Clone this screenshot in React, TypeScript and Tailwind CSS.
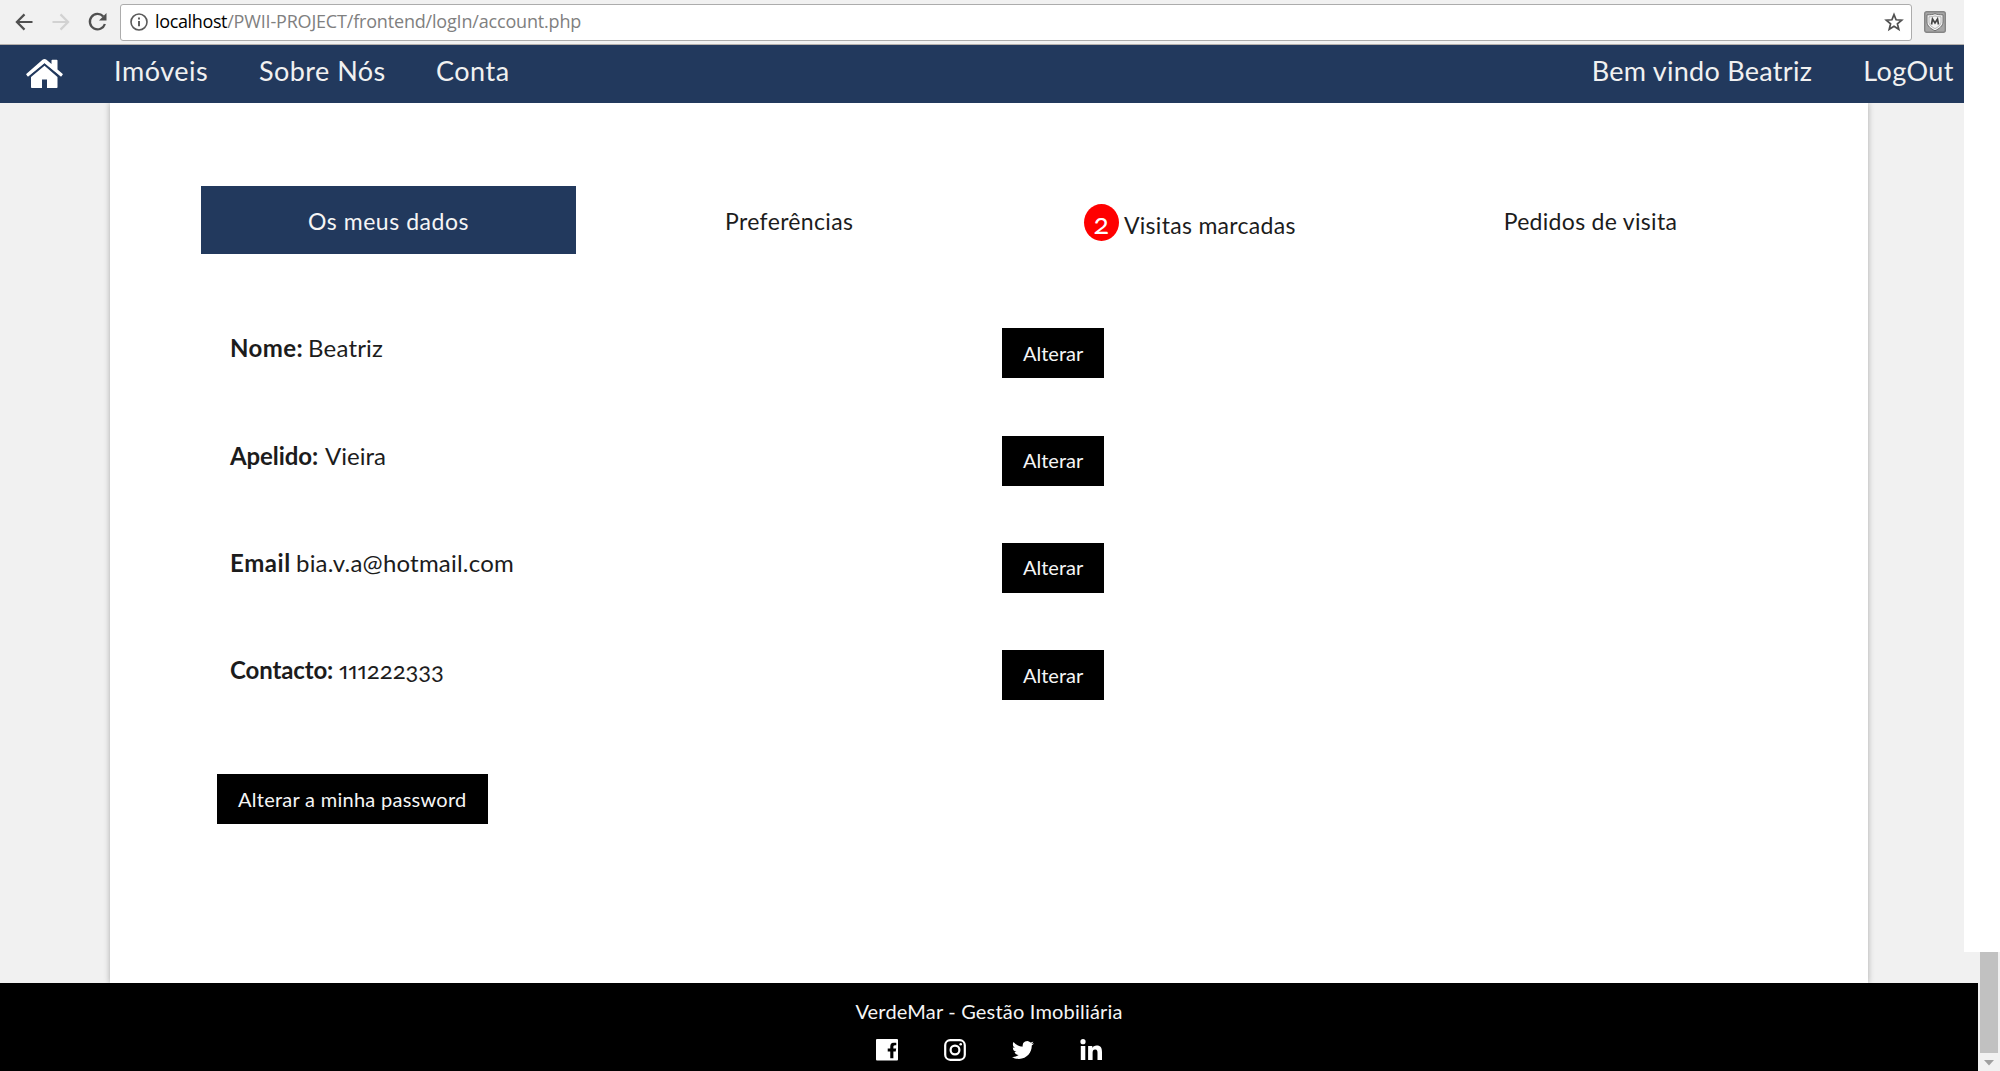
import { FaFacebookF } from "react-icons/fa";
import type { ReactNode } from "react";

function BrowserBar() {
  return (
    <div className="flex h-[45px] w-[1964px] items-center border-b border-[#b5b0ac] bg-[#f1f1f1]">
      <svg className="ml-[15px] h-[18px] w-[18px] shrink-0" viewBox="0 0 18 18" fill="none" stroke="#505050" strokeWidth="2.2">
        <path d="M17.500 9H2M9.500 1.400 1.900 9l7.600 7.600" />
      </svg>
      <svg className="ml-[19px] h-[18px] w-[18px] shrink-0" viewBox="0 0 18 18" fill="none" stroke="#d2d2d2" strokeWidth="2.2">
        <path d="M.5 9H16M8.500 1.400 16.100 9l-7.600 7.600" />
      </svg>
      <svg className="ml-[18px] h-[20px] w-[20px] shrink-0" viewBox="0 0 20 20">
        <path d="M15.200 4.400A7.700 7.700 0 1 0 16.900 12" fill="none" stroke="#505050" strokeWidth="2.3" />
        <path d="M18.500 1v7.500H11z" fill="#505050" />
      </svg>
      <div className="ml-[12px] flex h-[37px] w-[1792px] shrink-0 items-center rounded-[3px] border border-[#acacac] bg-white">
        <svg className="ml-[9px] h-[18px] w-[18px] shrink-0" viewBox="0 0 18 18" fill="none" stroke="#5a5a5a">
          <circle cx="9" cy="9" r="8" strokeWidth="1.6" />
          <path d="M9 8v5.2M9 4.6v2" strokeWidth="1.9" />
        </svg>
        <div className="ml-[7px] flex grow whitespace-nowrap pb-[2px] font-['Open_Sans',sans-serif] text-[18px] leading-[26px]">
          <span className="tracking-[-0.36px] text-black">localhost</span>
          <span className="tracking-[-0.18px] text-[#808080]">/PWII-PROJECT/frontend/logIn/account.php</span>
        </div>
        <svg className="mr-[7px] h-[20px] w-[20px]" viewBox="0 0 20 20" fill="none" stroke="#505050" strokeWidth="1.7">
          <path d="M10 2.600l2.100 5.200 5.600.4-4.300 3.600 1.400 5.500L10 14.300l-4.800 3 1.400-5.500L2.300 8.200l5.600-.4z" />
        </svg>
      </div>
      <svg className="ml-[12px] h-[22px] w-[22px]" viewBox="0 0 22 22">
        <rect x=".7" y=".7" width="20.6" height="20.6" rx="2" fill="#a6a6a6" stroke="#858585" strokeWidth="1.4" />
        <path d="M11 2.700c2 .9 4.600 1.100 8 1.100v7.200c0 4-4 6.800-8 8.800-4-2-8-4.800-8-8.800V3.800C6.400 3.800 9 3.600 11 2.700z" fill="#f4f4f4" stroke="#666" strokeWidth=".9" />
        <path d="M5 5.800c2.400 0 4.500-.3 6-.9 1.500.6 3.600.9 6 .9V11c0 3-3 5-6 6.600C8 16 5 14 5 11z" fill="none" stroke="#999" strokeWidth=".7" />
        <path d="M7.500 13.500 8.500 8 11 12l2.500-4 1 5.500" fill="none" stroke="#444" strokeWidth="1.700" />
      </svg>
    </div>
  );
}

function NavBar() {
  return (
    <nav className="flex h-[58px] w-[1964px] items-center whitespace-nowrap bg-[#22395d] pb-[7px] text-[27px] leading-[30px] text-[#f1f1f1]">
      <svg className="ml-[26px] mt-[7px] h-[30px] w-[37px] shrink-0" viewBox="0 0 37 30" fill="#fff">
        <path d="M18.500 6.800 31.500 18v10.200q0 .8-.8.8H21v-8.500h-5V29H5.800Q5 29 5 28.200V18z" />
        <path d="M18.500 0q1 0 2 .8L25.500 5V1.500q0-.8.8-.8h4.400q.8 0 .8.8v9l5 4.200q.6.500.1 1.100l-1.100 1.400q-.5.500-1.100 0L18.500 4.300 2.600 17.200q-.6.500-1.100 0L.4 15.800q-.5-.6.100-1.100L16.500.8q1-.8 2-.8z" />
        <path d="M3.500 17.500 18.500 5.200l15 12.300" fill="none" stroke="#22395d" strokeWidth="1" />
      </svg>
      <a className="ml-[51px] w-[145px] tracking-[0.55px]">Imóveis</a>
      <a className="w-[177px] tracking-[0.45px]">Sobre Nós</a>
      <a className="tracking-[0.5px]">Conta</a>
      <a className="ml-auto tracking-[0.28px]">Bem vindo Beatriz</a>
      <a className="ml-[51px] mr-[10px] tracking-[0.45px]">LogOut</a>
    </nav>
  );
}

function Tabs() {
  return (
    <div className="ml-[91px] grid h-[68px] w-[1577px] grid-cols-4 gap-x-[25.500px] whitespace-nowrap text-[23px] leading-[30px] text-[#1c1c1c]">
      <div className="flex items-center justify-center bg-[#22395d] pt-px tracking-[0.55px] text-[#f5f5f5]">Os meus dados</div>
      <div className="flex items-center justify-center pt-px tracking-[0.34px]">Preferências</div>
      <div className="flex items-center justify-center gap-[5px] pt-[6px] tracking-[0.3px]">
        <span className="-mt-px flex h-[37px] w-[35px] items-center justify-center rounded-[50%] bg-[#f00] text-[29px] tracking-normal text-white [font-feature-settings:'onum']">
          2
        </span>
        <span className="pt-[3px]">Visitas marcadas</span>
      </div>
      <div className="flex items-center justify-center pt-px tracking-[0.3px]">Pedidos de visita</div>
    </div>
  );
}

function BlackButton({ children }: { children: ReactNode }) {
  return (
    <button className="flex h-[50px] items-center justify-center whitespace-nowrap bg-black px-[21px] pb-px text-[20px] leading-[24px] text-[#f5f5f5]">
      {children}
    </button>
  );
}

function Field({ label, value }: { label: ReactNode; value: ReactNode }) {
  return (
    <div className="flex h-[107.300px] items-start">
      <div className="flex w-[773px] whitespace-nowrap pt-[5px] text-[24px] leading-[30px] text-[#1c1c1c]">
        {label}
        {value}
      </div>
      <BlackButton>
        <span>Alterar</span>
      </BlackButton>
    </div>
  );
}

function Fields() {
  return (
    <div className="ml-[119px] mt-[74.400px]">
      <Field
        label={<b className="ml-px w-[78px] tracking-[0.4px]">Nome:</b>}
        value={<span className="tracking-[0.2px]">Beatriz</span>}
      />
      <Field
        label={<b className="ml-px w-[95px] -tracking-[0.08px]">Apelido:</b>}
        value={<span>Vieira</span>}
      />
      <Field
        label={<b className="ml-px w-[66px] tracking-[0.6px]">Email</b>}
        value={<span className="tracking-[0.21px]">bia.v.a@hotmail.com</span>}
      />
      <Field
        label={<b className="ml-px w-[109px] -tracking-[0.13px]">Contacto:</b>}
        value={<span className="-tracking-[0.05px] [font-feature-settings:'onum','pnum']">111222333</span>}
      />
    </div>
  );
}

function Footer() {
  return (
    <footer className="flex h-[88px] w-[1978px] flex-col items-center bg-black text-[#f5f5f5]">
      <p className="mt-[15px] text-[20px] leading-[26px] tracking-[0.19px]">VerdeMar - Gestão Imobiliária</p>
      <div className="mt-[15px] flex h-[22px] w-[227px] justify-between">
        <svg className="h-[22px] w-[22px]" viewBox="0 0 22 22">
          <rect width="22" height="21.500" rx="1" fill="#fff" />
          <FaFacebookF x="8" y="3.500" width="12" height="18.500" color="#000" />
        </svg>
        <svg className="h-[22px] w-[22px]" viewBox="0 0 22 22" fill="none" stroke="#fff" strokeWidth="2.200">
          <rect x="1.200" y="1.200" width="19.600" height="19.600" rx="5" />
          <circle cx="11" cy="11" r="4.400" />
          <circle cx="16.700" cy="5.300" r="1.300" fill="#fff" stroke="none" />
        </svg>
        <svg className="h-[22px] w-[22px]" viewBox="0 0 24 24" fill="#fff">
          <path d="M23.950 4.570a10 10 0 0 1-2.820.770 4.960 4.960 0 0 0 2.160-2.720c-.950.550-2 .960-3.130 1.180a4.920 4.920 0 0 0-8.380 4.480C7.690 8.090 4.070 6.130 1.640 3.160a4.820 4.820 0 0 0-.670 2.480c0 1.710.870 3.210 2.190 4.100a4.900 4.900 0 0 1-2.230-.620v.060a4.920 4.920 0 0 0 3.950 4.830 5 5 0 0 1-2.210.080 4.940 4.940 0 0 0 4.600 3.420A9.870 9.870 0 0 1 0 19.540a13.990 13.990 0 0 0 7.550 2.210c9.050 0 14-7.500 14-13.980 0-.210 0-.420-.020-.630a9.940 9.940 0 0 0 2.460-2.550z" />
        </svg>
        <svg className="h-[22px] w-[22px]" viewBox="0 0 22 22" fill="#fff">
          <circle cx="3" cy="2.700" r="2.600" />
          <path d="M.800 7h4.500v14H.800zM8.100 7h4.200v1.900c.8-1.400 2.300-2.300 4.300-2.300 4.300 0 5.400 2.700 5.400 6.500V21h-4.500v-7c0-1.800-.1-3.600-2.300-3.600s-2.600 1.700-2.600 3.500V21H8.100z" />
        </svg>
      </div>
    </footer>
  );
}

export default function App() {
  return (
    <div className="relative h-[1071px] w-[2000px] overflow-hidden bg-[#f1f1f1] font-[Lato,sans-serif]">
      <BrowserBar />
      <NavBar />
      <main className="ml-[110px] h-[880px] w-[1758px] bg-white pt-[83px] shadow-[0_0_6px_rgba(0,0,0,0.3)] [clip-path:inset(0_-10px)]">
        <Tabs />
        <Fields />
        <div className="ml-[107px] mt-[16.500px] flex">
          <BlackButton>
            <span className="tracking-[0.27px]">Alterar a minha password</span>
          </BlackButton>
        </div>
      </main>
      <Footer />
      <div className="absolute right-0 top-0 h-[952px] w-[36px] bg-white" />
      <div className="absolute bottom-0 right-0 flex h-[119px] w-[20px] flex-col">
        <div className="h-[101px] w-[18px] bg-[#c1c1c1]" />
        <svg className="ml-[4px] mt-[7px] h-[6px] w-[10px]" viewBox="0 0 10 6">
          <path d="M0 0h10L5 5.500z" fill="#a0a0a0" />
        </svg>
      </div>
    </div>
  );
}
